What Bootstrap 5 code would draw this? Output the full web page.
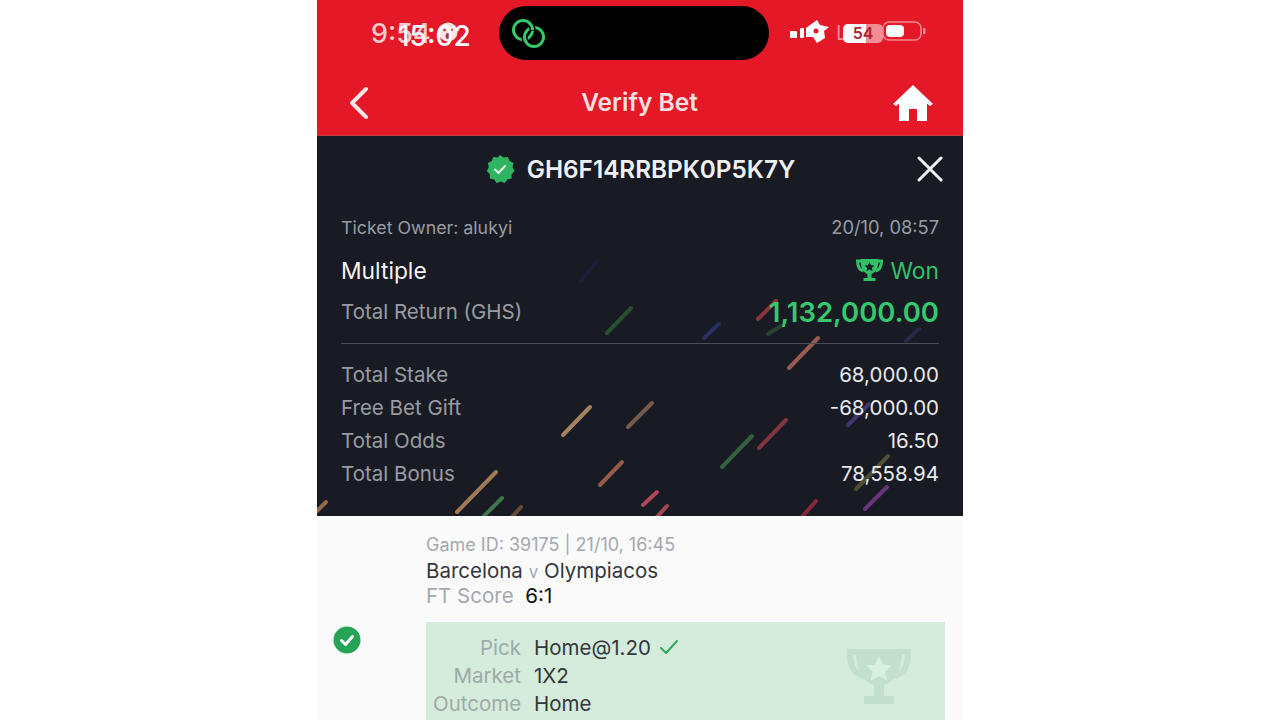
<!DOCTYPE html>
<html lang="en">
<head>
<meta charset="utf-8">
<title>Verify Bet</title>
<link href="https://cdn.jsdelivr.net/npm/bootstrap@5.3.0/dist/css/bootstrap.min.css" rel="stylesheet">
<style>
html,body{height:720px;overflow:hidden;background:#fff}
body{font-family:Inter,"Liberation Sans",sans-serif}
.phone{width:646px;height:720px;margin-left:317px;overflow:hidden;background:#fafafa}
.redtop{background:#e41827;height:136px;border-bottom:1px solid #c93a44}
.statusbar{height:66px}
.island{left:182px;top:6px;width:270px;height:54px;border-radius:27px;background:#000;padding-left:12px}
.time-a,.time-b{font-size:27px;line-height:1;top:20px;font-weight:500}
.time-a{left:54px;color:#f6c9cd}
.time-b{left:81px;color:#fff;font-size:28px;top:22px}
.ghost-face{left:121px;top:21px}
.status-r{left:473px;top:18px}
.ghost-l{left:519px;top:23px;color:#f08b93;font-size:20px;line-height:1}
.pillpct{left:526px;top:24px;width:40px;height:19px;border-radius:5px;background:linear-gradient(90deg,#fff 58%,#f08d95 58%);color:#b3222d;font-size:16px;font-weight:600;line-height:19px;text-align:center}
.batt{left:565px;top:21px;width:44px;height:20px}
.titlebar{height:69px;padding:4px 30px 0 31px}
.title-t{font-size:24.500px;font-weight:600;color:#fbdfe1;margin:0 0 0 16px;line-height:1}
.darkpanel{background:#181b24;height:380px;padding:0 24px}
.streaks{left:0;top:0;width:646px;height:380px;opacity:.82}
.darkpanel>*:not(.streaks){position:relative}
.coderow{height:66px}
.code-t{font-size:24.300px;font-weight:600;color:#f0f1f3;line-height:1}
.closex{right:20px;top:20px}
.owner{height:26px;margin-top:13px;font-size:17.800px;color:#9a9ca3}
.owner span+span{font-size:18.300px}
.multi{height:44px;margin-top:8px}
.multi-l{font-size:22.800px;color:#f4f4f6}
.won{font-size:22.800px;color:#33c167}
.ret{height:39px;font-size:20.500px;color:#9a9ca3;margin-bottom:11px}
.ret-v{font-size:27.500px;font-weight:600;color:#34c96c}
.rule-l{height:1px;background:#4d4f57;margin-bottom:15px}
.sumrow{height:33px;font-size:20.500px;color:#9a9ca3}
.sumrow b{font-weight:400;color:#e9eaec}
.lightpart{padding:17px 18px 0 16px}
.tickcol{width:93px;padding-top:93px}
.gid{font-size:18px;color:#a5a8ae;line-height:24px}
.match{font-size:20.500px;color:#34363c;line-height:28px}
.vs{color:#a5a8ae;font-size:17px}
.score{font-size:20.500px;color:#a5a8ae;line-height:20px;margin-bottom:16px}
.score b{font-weight:400;color:#111;margin-left:6px}
.pickbox{background:#d5ebdc;height:110px;padding:12px 0 0 7px}
.pk{height:28px;font-size:20.500px;line-height:28px;color:#33383a}
.pk span{width:88px;text-align:right;color:#9eaaa8;margin-right:13px;white-space:nowrap}
.cup{right:33px;top:25px}
</style>
</head>
<body>
<main class="phone">
  <header class="redtop">
    <div class="statusbar position-relative">
      <span class="time-a position-absolute">9:54</span>
      <svg class="ghost-face position-absolute" width="20" height="22" viewBox="0 0 20 22"><circle cx="10" cy="11" r="9.500" fill="#fbe4e5"/><circle cx="6.500" cy="9" r="1.300" fill="#a33"/><circle cx="13.500" cy="9" r="1.300" fill="#a33"/><ellipse cx="10" cy="15" rx="2.400" ry="3" fill="#a33"/></svg>
      <span class="time-b position-absolute">15:02</span>
      <div class="island position-absolute d-flex align-items-center">
        <svg width="36" height="30" viewBox="0 0 36 30" fill="none" stroke-width="3">
          <circle cx="12" cy="12" r="9.500" stroke="#34c96c"/>
          <circle cx="23" cy="19" r="9.500" stroke="#000" stroke-width="6"/>
          <circle cx="23" cy="19" r="9.500" stroke="#34c96c"/>
          <path d="M19 5.600A9.500 9.500 0 0 1 21.500 12" stroke="#000" stroke-width="6"/>
          <path d="M18 4.600A9.500 9.500 0 0 1 21.500 12" stroke="#34c96c"/>
        </svg>
      </div>
      <svg class="status-r position-absolute" width="46" height="30" viewBox="0 0 46 30" fill="#fff"><rect y="13" width="7" height="7" rx="1"/><rect x="10" y="10" width="4" height="10" rx="1"/><path d="M16 10 27 2l3 5 9 2-5 4 1 7-8 5-4-6h-7z"/><circle cx="26" cy="13" r="2.500" fill="#e41827"/></svg>
      <span class="ghost-l position-absolute">L</span>
      <span class="pillpct position-absolute">54</span>
      <svg class="batt position-absolute" viewBox="0 0 44 20"><rect x="1" y="1" width="38" height="18" rx="6" fill="none" stroke="#f28b93" stroke-width="1.500"/><rect x="4" y="4" width="18" height="12" rx="4" fill="#fff"/><rect x="41" y="7" width="2.500" height="6" rx="1" fill="#f28b93"/></svg>
    </div>
    <nav class="titlebar d-flex align-items-center justify-content-between">
      <svg width="22" height="34" viewBox="0 0 22 34" fill="none" stroke="#fbe4e5" stroke-width="4" stroke-linecap="round" stroke-linejoin="round"><path d="M18 3 4 17l14 14"/></svg>
      <h1 class="title-t">Verify Bet</h1>
      <svg width="40" height="38" viewBox="0 0 40 38" fill="#fff"><path d="M20 1 0 20l3 2 3-2.500V37h10V25h8v12h10V19.500l3 2.500 3-2z"/></svg>
    </nav>
  </header>

  <section class="darkpanel position-relative">
    <svg class="streaks position-absolute" viewBox="0 0 646 380" fill="none" stroke-width="4" stroke-linecap="round">
      <path stroke="#1c2040" d="M264 145 280 125"/>
      <path stroke="#2c5a35" d="M290 197 314 172"/>
      <path stroke="#a33a3f" d="M441 183 459 165"/>
      <path stroke="#2a3570" d="M387 202 402 188"/>
      <path stroke="#2c4a30" d="M451 198 464 190"/>
      <path stroke="#b56a5f" d="M472 232 501 202"/>
      <path stroke="#2d2a55" d="M589 205 602 193"/>
      <path stroke="#c49a6b" d="M246 299 273 271"/>
      <path stroke="#8a6a50" d="M311 291 335 267"/>
      <path stroke="#9a3c45" d="M442 312 469 284"/>
      <path stroke="#3f7048" d="M405 331 435 300"/>
      <path stroke="#b06a50" d="M283 349 305 326"/>
      <path stroke="#c09060" d="M140 376 179 336"/>
      <path stroke="#4a8a50" d="M167 380 185 362"/>
      <path stroke="#7a5540" d="M194 382 204 371"/>
      <path stroke="#b07a50" d="M0 375 9 366"/>
      <path stroke="#d05068" d="M326 369 340 356"/>
      <path stroke="#c05058" d="M339 382 350 370"/>
      <path stroke="#a02a40" d="M484 382 499 365"/>
      <path stroke="#7a3a90" d="M548 373 570 351"/>
      <path stroke="#5a5a35" d="M539 353 571 320"/>
      <path stroke="#4a3a80" d="M531 289 552 268"/>
    </svg>
    <div class="coderow d-flex align-items-center justify-content-center gap-2">
      <svg width="30" height="30" viewBox="0 0 30 30"><path fill="#2fb562" d="M15 1l3.600 2.400 4.300-.3 1.700 4 3.800 2-.9 4.200 2 3.700-2.900 3.200-.1 4.300-4.200 1-2.600 3.500-4-1.500-4 1.500-2.600-3.500-4.200-1-.1-4.300L1.800 17l2-3.700-.9-4.200 3.800-2 1.700-4 4.300.3z"/><path fill="none" stroke="#e6f7ec" stroke-width="2" stroke-linecap="round" stroke-linejoin="round" d="M10 15.500l3.500 3.500 6.500-7"/></svg>
      <span class="code-t ms-1">GH6F14RRBPK0P5K7Y</span>
    </div>
    <svg class="closex position-absolute" width="26" height="26" viewBox="0 0 26 26" stroke="#f5f5f5" stroke-width="3" stroke-linecap="round"><path d="M2 2l22 22M24 2 2 24"/></svg>

    <div class="owner d-flex justify-content-between align-items-center"><span>Ticket Owner: alukyi</span><span>20/10, 08:57</span></div>
    <div class="multi d-flex justify-content-between align-items-center">
      <span class="multi-l">Multiple</span>
      <span class="won d-flex align-items-center gap-2">
        <svg width="27" height="27" viewBox="0 0 27 27"><path fill="none" stroke="#33c167" stroke-width="3" d="M5 3H1.500c0 6 2 9 6 10M22 3h3.500c0 6-2 9-6 10"/><path fill="#33c167" d="M4.500 1h18c0 9-2.500 13-7 15v4h4v3h-12v-3h4v-4c-4.500-2-7-6-7-15z"/><path fill="#181b24" d="m13.500 4 1.500 3.200 3.400.4-2.500 2.300.7 3.400-3.100-1.700-3.100 1.700.7-3.400-2.500-2.300 3.400-.4z"/></svg>
        Won
      </span>
    </div>
    <div class="ret d-flex justify-content-between align-items-center"><span>Total Return (GHS)</span><span class="ret-v">1,132,000.00</span></div>
    <div class="rule-l"></div>
    <div class="sumrow d-flex justify-content-between align-items-center"><span>Total Stake</span><b>68,000.00</b></div>
    <div class="sumrow d-flex justify-content-between align-items-center"><span>Free Bet Gift</span><b>-68,000.00</b></div>
    <div class="sumrow d-flex justify-content-between align-items-center"><span>Total Odds</span><b>16.50</b></div>
    <div class="sumrow d-flex justify-content-between align-items-center"><span>Total Bonus</span><b>78,558.94</b></div>
  </section>

  <section class="lightpart d-flex">
    <div class="tickcol flex-shrink-0">
      <svg width="28" height="28" viewBox="0 0 28 28"><circle cx="14" cy="14" r="13.500" fill="#26a354"/><path fill="none" stroke="#fff" stroke-width="3" stroke-linecap="round" stroke-linejoin="round" d="M8.500 14.500l4 4 7-8"/></svg>
    </div>
    <div class="flex-grow-1">
      <div class="gid">Game ID: 39175 | 21/10, 16:45</div>
      <div class="match">Barcelona <span class="vs">v</span> Olympiacos</div>
      <div class="score">FT Score <b>6:1</b></div>
      <div class="pickbox position-relative">
        <div class="pk d-flex"><span>Pick</span>Home@1.20
          <svg class="ms-2 mt-1" width="20" height="20" viewBox="0 0 20 20" fill="none" stroke="#2fa85a" stroke-width="2" stroke-linecap="round" stroke-linejoin="round"><path d="M2 10l5 5L18 3"/></svg>
        </div>
        <div class="pk d-flex"><span>Market</span>1X2</div>
        <div class="pk d-flex"><span>Outcome</span>Home</div>
        <svg class="cup position-absolute" width="66" height="58" viewBox="0 0 66 58"><path fill="none" stroke="#c3e0cd" stroke-width="6" d="M12 5H4c0 14 3 21 14 24M54 5h8c0 14-3 21-14 24"/><path fill="#c3e0cd" d="M10 2h46c0 22-6 32-18 36v11h10v8H18v-8h10V38C16 34 10 24 10 2z"/><path fill="#d9efe2" d="m33 9 4 8.500 9 1-6.700 6.200 1.900 9-8.200-4.500-8.200 4.500 1.900-9L20 18.500l9-1z"/></svg>
      </div>
    </div>
  </section>
</main>
</body>
</html>
